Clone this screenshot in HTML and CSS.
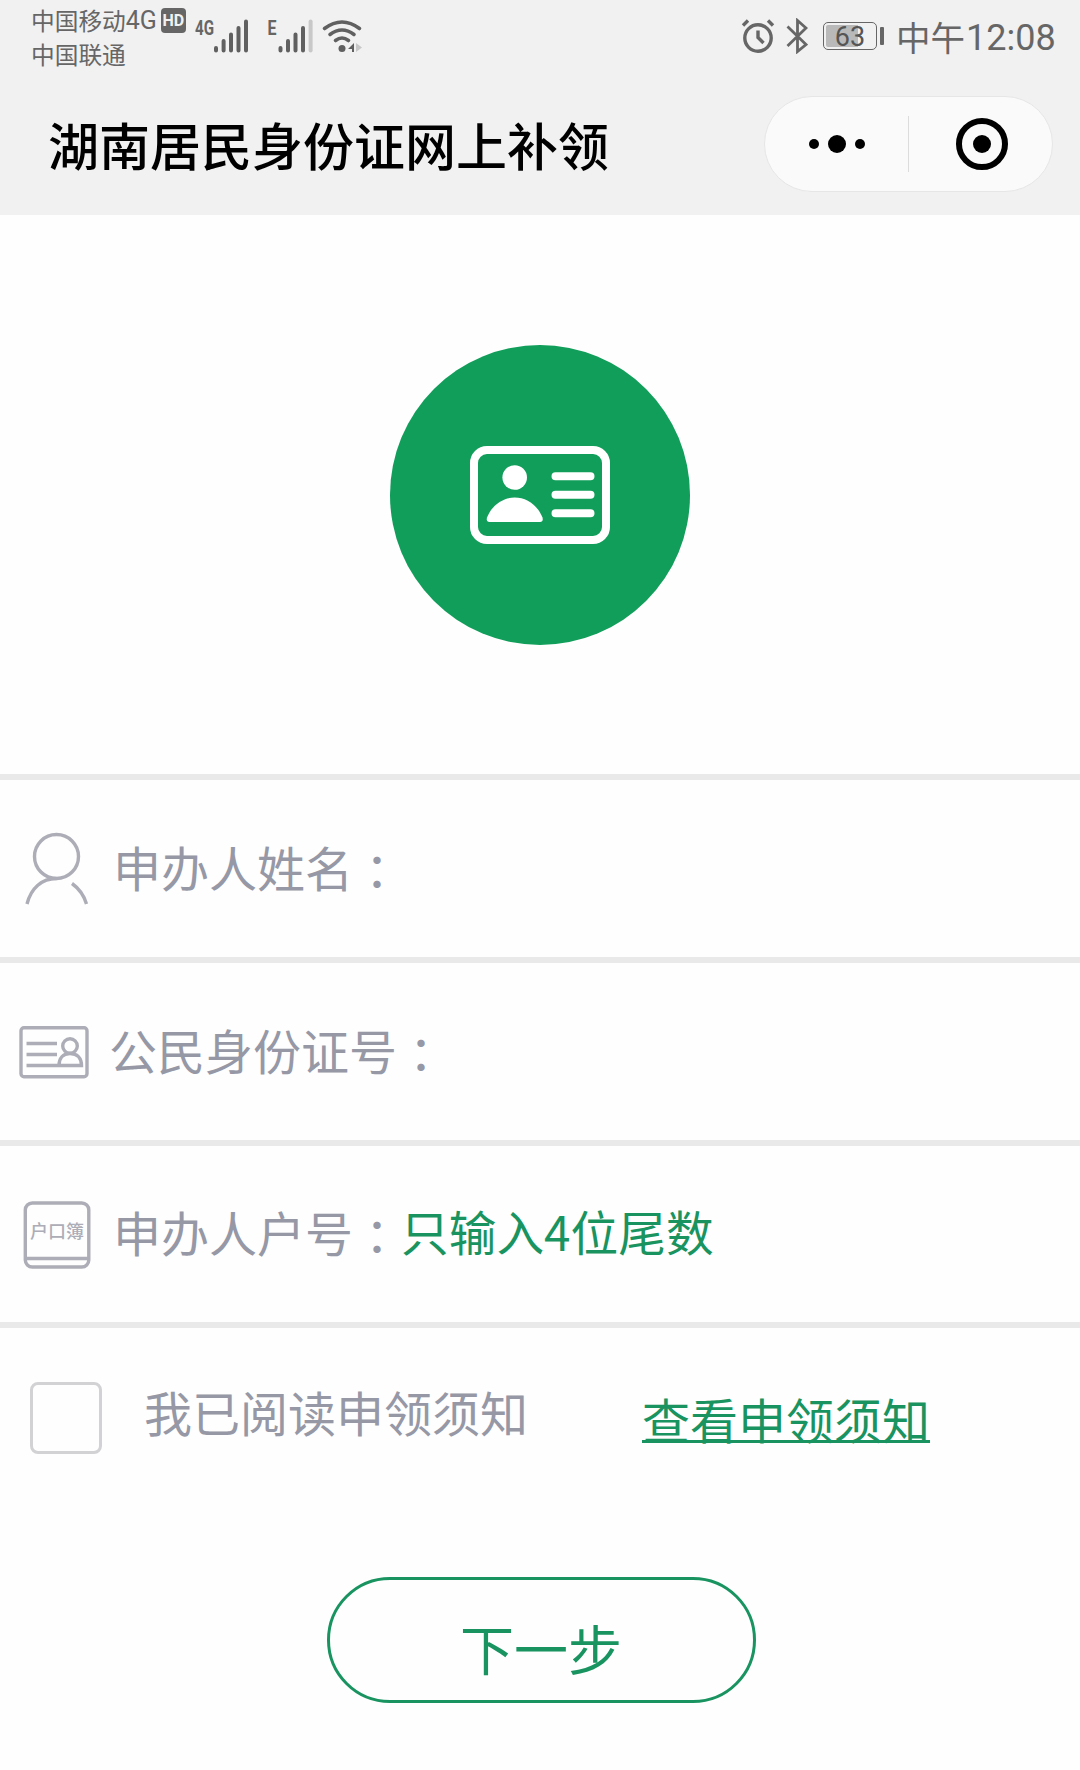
FILE: index.html
```
<!DOCTYPE html>
<html lang="zh-CN">
<head>
  <meta charset="UTF-8">
  <meta name="viewport" content="width=device-width, initial-scale=1.0">
  <title>湖南居民身份证网上补领</title>
  <link rel="stylesheet" href="styles.css">
</head>
<body>
  <header>
    <div class="status-bar">
      <div class="carriers">
        <div class="carrier">中国移动<span class="latin">4G</span><span class="hd">HD</span></div>
        <div class="carrier">中国联通</div>
      </div>
      <svg class="signals" width="180" height="72" viewBox="190 0 180 72">
        <g class="signal-text">
          <text x="195" y="34.5" textLength="19" lengthAdjust="spacingAndGlyphs">4G</text>
          <text x="267.5" y="34.5" textLength="9" lengthAdjust="spacingAndGlyphs">E</text>
        </g>
        <g class="signal-bars">
          <path d="M216 48v2.5M223.6 41v9.500M231 34.500v16M238.500 28v22.500M246 21.500v29"/>
          <path d="M280.500 48v2.500M288 41v9.500M295.500 34.500v16M303 28v22.500"/>
          <path class="faded" d="M310.600 21.500v29"/>
        </g>
        <g class="wifi">
          <path d="M324.500 28.500q17.500-13 35 0M330 34.500q12-9 24 0M335.500 40.500q6.500-5 13 0"/>
          <circle cx="342" cy="48.500" r="3.500"/>
          <path class="wifi-up" d="M354 43v9h-2v-3h-4z"/>
          <path class="wifi-down" d="M356 43l6 4.500-6 4.500z"/>
        </g>
      </svg>
      <div class="status-right">
        <svg class="line-icon" width="34" height="36" viewBox="0 0 34 36">
          <circle cx="17" cy="20" r="13.200"/>
          <path d="M17 12.500v7l5.500 5.500M2 7.500l5-5M27 2.500l5 5"/>
        </svg>
        <svg class="line-icon bluetooth" width="22" height="36" viewBox="0 0 22 36">
          <path d="M1.500 8.500L20 26.500l-8.500 7V2.500L20 10 1.500 28"/>
        </svg>
        <div class="battery"><span>63</span></div>
        <div class="battery-cap"></div>
        <div class="clock">中午<span class="latin">12:08</span></div>
      </div>
    </div>
    <div class="nav-bar">
      <h1>湖南居民身份证网上补领</h1>
      <div class="capsule">
        <div class="capsule-btn">
          <svg width="60" height="20" viewBox="0 0 60 20">
            <circle cx="7" cy="10" r="5"/>
            <circle cx="30" cy="10" r="9"/>
            <circle cx="53" cy="10" r="5"/>
          </svg>
        </div>
        <div class="capsule-line"></div>
        <div class="capsule-btn close">
          <svg width="54" height="54" viewBox="0 0 54 54">
            <circle class="ring" cx="27" cy="27" r="23"/>
            <circle cx="27" cy="27" r="9"/>
          </svg>
        </div>
      </div>
    </div>
  </header>

  <div class="banner">
    <div class="badge">
      <svg width="140" height="98" viewBox="0 0 140 98">
        <rect class="card" x="4" y="4" width="132" height="90" rx="13"/>
        <circle cx="44.700" cy="31.500" r="12.300"/>
        <path d="M19.500 76q-3.500 0-2.500-4.500C22 59 33 51.500 44.700 51.500S67.500 59 72.500 71.500q1 4.500-2.500 4.500z"/>
        <path class="card-lines" d="M85.500 30.300h35M85.500 48.800h35M85.500 67.300h35"/>
      </svg>
    </div>
  </div>

  <div class="form">
    <div class="row">
      <svg class="icon" width="100" height="80" viewBox="0 0 100 80">
        <circle cx="56.500" cy="27.500" r="22"/>
        <path d="M27 75C31 59 42 49.500 56.500 49.500M72 54.500C79 59.500 84 66.500 86.500 75"/>
      </svg>
      <label>申办人姓名<span class="colon" lang="zh-TW">：</span></label>
    </div>
    <div class="row row-id">
      <svg class="icon" width="100" height="80" viewBox="0 0 100 80">
        <rect x="21" y="15.700" width="66" height="49" rx="3"/>
        <path d="M26.500 31.500h30.500M26.500 42.500h30.500M26.500 53.500H81.500C81.500 46 77 41.500 70 41.500S59 46.500 59 53.500"/>
        <circle cx="70" cy="34" r="7.300"/>
      </svg>
      <label>公民身份证号<span class="colon" lang="zh-TW">：</span></label>
    </div>
    <div class="row row-book">
      <svg class="icon" width="100" height="80" viewBox="0 0 100 80">
        <rect x="25.300" y="9" width="63.500" height="64" rx="7"/>
        <path d="M25.300 64.500h63.500"/>
        <text x="30" y="44" textLength="54" lengthAdjust="spacingAndGlyphs">户口簿</text>
      </svg>
      <label>申办人户号<span class="colon" lang="zh-TW">：</span></label>
      <span class="hint">只输入4位尾数</span>
    </div>
    <div class="row agree">
      <span class="checkbox"></span>
      <span class="agree-text">我已阅读申领须知</span>
      <a class="notice-link">查看申领须知</a>
    </div>
  </div>

  <button class="next">下一步</button>
</body>
</html>
```
FILE: styles.css
```
:root {
  --green: #109e5a;
  --text-green: #199460;
  --label: #9698a6;
  --status: #666;
  --line: #e9e9ea;
}

* {
  box-sizing: border-box;
}

body {
  margin: 0;
  width: 1080px;
  height: 1770px;
  overflow: hidden;
  background-color: #fefefe;
  font-family: "Noto Sans CJK SC", sans-serif;
  display: flex;
  flex-direction: column;
}

svg {
  display: block;
  flex-shrink: 0;
}

header {
  height: 215px;
  background-color: #f1f1f1;
}

.latin {
  font-family: Roboto, sans-serif;
}

/* status bar */
.status-bar {
  display: flex;
  height: 72px;
  color: var(--status);
}

.carriers {
  width: 190px;
  padding: 3px 0 0 31px;
}

.carrier {
  display: flex;
  align-items: center;
  height: 34px;
  font-size: 23.7px;
  line-height: 34px;
  white-space: nowrap;
}

.carrier .latin {
  padding-top: 2px;
  font-size: 25px;
}

.hd {
  width: 25px;
  height: 25px;
  margin-left: 4px;
  border-radius: 4px;
  background-color: var(--status);
  color: #f1f1f1;
  font: bold 16px/25px Roboto, sans-serif;
  text-align: center;
}

.signal-text {
  font: bold 20px Roboto, sans-serif;
  fill: var(--status);
}

.signal-bars {
  fill: none;
  stroke: #606060;
  stroke-width: 4;
  stroke-linecap: round;
}

.signal-bars .faded {
  stroke: #c8c8c8;
}

.wifi {
  fill: none;
  stroke: #606060;
  stroke-width: 3.6;
  stroke-linecap: round;
}

.wifi circle,
.wifi-up {
  fill: #606060;
  stroke: none;
}

.wifi-down {
  fill: #c8c8c8;
  stroke: none;
}

.status-right {
  display: flex;
  align-items: center;
  flex: 1;
  padding-left: 371px;
}

.line-icon {
  fill: none;
  stroke: var(--status);
  stroke-width: 3.4;
}

.bluetooth {
  margin-left: 11px;
  stroke-width: 2.8;
}

.battery {
  width: 54px;
  height: 28px;
  margin-left: 15px;
  padding: 2px;
  border: 1.5px solid var(--status);
  border-radius: 5px;
  background: linear-gradient(to right, #b9b9b9 32px, transparent 32px) no-repeat content-box;
  color: #555;
  font: 27px/24px Roboto, sans-serif;
  text-align: center;
}

.battery-cap {
  width: 4px;
  height: 18px;
  margin-left: 3px;
  border-radius: 1px;
  background-color: var(--status);
}

.clock {
  display: flex;
  align-items: center;
  margin-left: 12px;
  font-size: 34.5px;
  line-height: 70px;
  white-space: nowrap;
}

.clock .latin {
  padding-top: 3px;
  margin-left: 1px;
  font-size: 36px;
}

/* title */
.nav-bar {
  display: flex;
  align-items: center;
  justify-content: space-between;
  height: 143px;
  padding: 0 27px 0 48px;
}

h1 {
  margin: 0;
  color: #000;
  font-size: 51px;
  line-height: 60px;
  font-weight: 500;
}

.capsule {
  display: flex;
  align-items: center;
  width: 289px;
  height: 96px;
  border: 1px solid #e6e6e6;
  border-radius: 48px;
  background-color: #fafafa;
}

.capsule-btn {
  display: flex;
  width: 143px;
  align-items: center;
  justify-content: center;
}

.capsule-btn.close {
  padding-left: 3px;
}

.capsule-btn .ring {
  fill: none;
  stroke: #000;
  stroke-width: 6;
}

.capsule-line {
  width: 1px;
  height: 56px;
  background-color: #dcdcdc;
}

.banner {
  display: flex;
  align-items: center;
  justify-content: center;
  height: 559px;
}

.badge {
  display: flex;
  align-items: center;
  justify-content: center;
  width: 300px;
  height: 300px;
  border-radius: 50%;
  background-color: var(--green);
}

.badge svg {
  margin-right: 1px;
  fill: #fff;
}

.badge .card {
  fill: none;
  stroke: #fff;
  stroke-width: 8;
}

.card-lines {
  stroke: #fff;
  stroke-width: 8;
  stroke-linecap: round;
}

/* form */
.row {
  display: flex;
  align-items: center;
  height: 183px;
  border-top: 6px solid var(--line);
  color: var(--label);
  font-size: 48px;
  line-height: 60px;
  white-space: nowrap;
}

.row label {
  height: 66px;
  margin-left: 13px;
}

.row-id label {
  margin-left: 9px;
}

.row-book {
  height: 182px;
}

.colon {
  font-family: "Noto Sans CJK TC", sans-serif;
  line-height: 0;
  vertical-align: -3px;
}

.icon {
  fill: none;
  stroke: #adadb7;
  stroke-width: 3.4;
}

.icon text {
  fill: #adadb7;
  stroke: none;
  font-size: 18px;
  font-weight: 500;
}

.hint {
  height: 66px;
  color: var(--text-green);
  font-size: 47.7px;
}

.agree {
  align-items: flex-start;
  height: 255px;
  padding: 54px 0 0 30px;
}

.checkbox {
  width: 72px;
  height: 72px;
  border: 3px solid #d2d2d5;
  border-radius: 8px;
}

.agree-text {
  width: 540px;
  padding-left: 42px;
  margin-top: -1px;
}

.notice-link {
  height: 60px;
  margin-top: 6px;
  color: var(--text-green);
  text-decoration: underline;
  text-decoration-thickness: 3px;
  text-underline-offset: 1px;
  text-decoration-skip-ink: none;
}

.next {
  align-self: center;
  width: 429px;
  height: 126px;
  margin-left: 3px;
  padding: 16px 1px 0 0;
  border: 3px solid var(--text-green);
  border-radius: 63px;
  background: none;
  color: var(--text-green);
  font-family: inherit;
  font-size: 54px;
  line-height: 60px;
}
```
